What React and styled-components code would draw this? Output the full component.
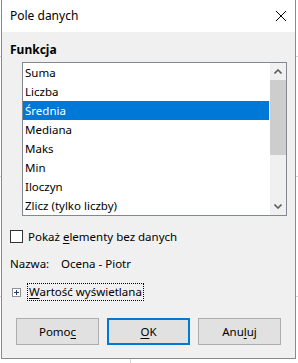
import React from 'react';
import styled, { createGlobalStyle } from 'styled-components';

const GlobalStyle = createGlobalStyle`
  html, body {
    margin: 0;
    padding: 0;
  }
  body {
    background-color: #ffffff;
    background-image:
      linear-gradient(to right, transparent 130px, #d4d4d4 130px, #d4d4d4 131px, transparent 131px),
      repeating-linear-gradient(to bottom, transparent 0, transparent 56px, #d4d4d4 56px, #d4d4d4 57px, transparent 57px, transparent 120px);
    font-family: "Noto Sans", "Open Sans", sans-serif;
    font-size: 11.5px;
    color: #000;
  }
`;

const functions = [
  'Suma',
  'Liczba',
  'Średnia',
  'Mediana',
  'Maks',
  'Min',
  'Iloczyn',
  'Zlicz (tylko liczby)',
];

const Window = styled.div`
  box-sizing: border-box;
  width: 295px;
  height: 359px;
  margin-left: 1px;
  border: 1px solid #8a8a8a;
  border-top: none;
  background: #f0f0f0;
  display: flex;
  flex-direction: column;
`;

const TitleBar = styled.div`
  height: 32px;
  background: #ffffff;
  display: flex;
  align-items: center;
  justify-content: space-between;
  padding: 0 9px 0 8px;
`;

const Title = styled.span`
  font-size: 12px;
  line-height: 16px;
`;

const CloseIcon = styled.svg`
  width: 10px;
  height: 10px;
  display: block;
`;

const Content = styled.div`
  padding: 0 8px;
  display: flex;
  flex-direction: column;
`;

const SectionLabel = styled.div`
  font-weight: 700;
  font-size: 12px;
  line-height: 16px;
  margin-top: 10px;
`;

const ListBox = styled.div`
  box-sizing: border-box;
  margin: 4px 0 0 12px;
  width: 265px;
  height: 154px;
  border: 1px solid #828790;
  background: #ffffff;
  display: flex;
`;

const Rows = styled.div`
  flex: 1;
  display: flex;
  flex-direction: column;
`;

const Row = styled.div`
  height: 19px;
  line-height: 19px;
  padding-left: 2px;
  background: ${(p) => (p.$selected ? '#0078d7' : 'transparent')};
  color: ${(p) => (p.$selected ? '#ffffff' : '#000000')};
  white-space: nowrap;
`;

const ScrollBar = styled.div`
  width: 16px;
  background: #f0f0f0;
  display: flex;
  flex-direction: column;
  margin-left: 1px;
`;

const ScrollArrow = styled.div`
  height: 17px;
  display: flex;
  align-items: center;
  justify-content: center;
`;

const ScrollThumb = styled.div`
  height: 75px;
  background: #cdcdcd;
`;

const ScrollSpace = styled.div`
  flex: 1;
`;

const CheckRow = styled.label`
  display: flex;
  align-items: center;
  height: 16px;
  margin-top: 12px;
  gap: 5px;
`;

const CheckBox = styled.span`
  box-sizing: border-box;
  width: 13px;
  height: 13px;
  border: 1px solid #333333;
  background: #ffffff;
`;

const Accel = styled.span`
  text-decoration: underline;
  text-underline-offset: 2px;
`;

const NameRow = styled.div`
  display: flex;
  height: 16px;
  line-height: 16px;
  margin-top: 12px;
`;

const NameLabel = styled.span`
  width: 51px;
`;

const ExpanderRow = styled.div`
  display: flex;
  align-items: center;
  height: 18px;
  margin: 11px 0 0 2px;
  gap: 6px;
`;

const ExpanderBox = styled.svg`
  width: 9px;
  height: 9px;
  display: block;
`;

const FocusLabel = styled.span`
  border: 1px dotted #000;
  padding: 0 1px;
  line-height: 16px;
`;

const ButtonBar = styled.div`
  display: flex;
  gap: 8px;
  margin: 17px 0 0 6px;
`;

const Button = styled.button`
  box-sizing: border-box;
  width: 83px;
  height: 27px;
  padding: 0;
  font-family: inherit;
  font-size: 11.5px;
  color: #000;
  background: #e1e1e1;
  border: ${(p) => (p.$default ? '2px solid #0078d7' : '1px solid #adadad')};
`;

function Chevron({ up }) {
  return (
    <svg width="8" height="5" viewBox="0 0 8 5">
      <path
        d={up ? 'M0.5 4.5 L4 1 L7.5 4.5' : 'M0.5 0.5 L4 4 L7.5 0.5'}
        fill="none"
        stroke="#606060"
        strokeWidth="1.6"
      />
    </svg>
  );
}

export default function App() {
  return (
    <>
      <GlobalStyle />
      <Window>
        <TitleBar>
          <Title>Pole danych</Title>
          <CloseIcon viewBox="0 0 10 10">
            <path d="M0 0 L10 10 M10 0 L0 10" stroke="#000" strokeWidth="1" />
          </CloseIcon>
        </TitleBar>
        <Content>
          <SectionLabel>Funkcja</SectionLabel>
          <ListBox>
            <Rows>
              {functions.map((f) => (
                <Row key={f} $selected={f === 'Średnia'}>
                  {f}
                </Row>
              ))}
            </Rows>
            <ScrollBar>
              <ScrollArrow>
                <Chevron up />
              </ScrollArrow>
              <ScrollThumb />
              <ScrollSpace />
              <ScrollArrow>
                <Chevron />
              </ScrollArrow>
            </ScrollBar>
          </ListBox>
          <CheckRow>
            <CheckBox />
            <span>
              Pokaż <Accel>e</Accel>lementy bez danych
            </span>
          </CheckRow>
          <NameRow>
            <NameLabel>Nazwa:</NameLabel>
            <span>Ocena - Piotr</span>
          </NameRow>
          <ExpanderRow>
            <ExpanderBox viewBox="0 0 9 9">
              <rect x="0.5" y="0.5" width="8" height="8" fill="#fff" stroke="#919191" />
              <path d="M2 4.5 H7 M4.5 2 V7" stroke="#1e3d7b" strokeWidth="1" />
            </ExpanderBox>
            <FocusLabel>
              <Accel>W</Accel>artość wyświetlana
            </FocusLabel>
          </ExpanderRow>
          <ButtonBar>
            <Button>
              Pomo<Accel>c</Accel>
            </Button>
            <Button $default>
              <Accel>O</Accel>K
            </Button>
            <Button>
              Anu<Accel>l</Accel>uj
            </Button>
          </ButtonBar>
        </Content>
      </Window>
    </>
  );
}
